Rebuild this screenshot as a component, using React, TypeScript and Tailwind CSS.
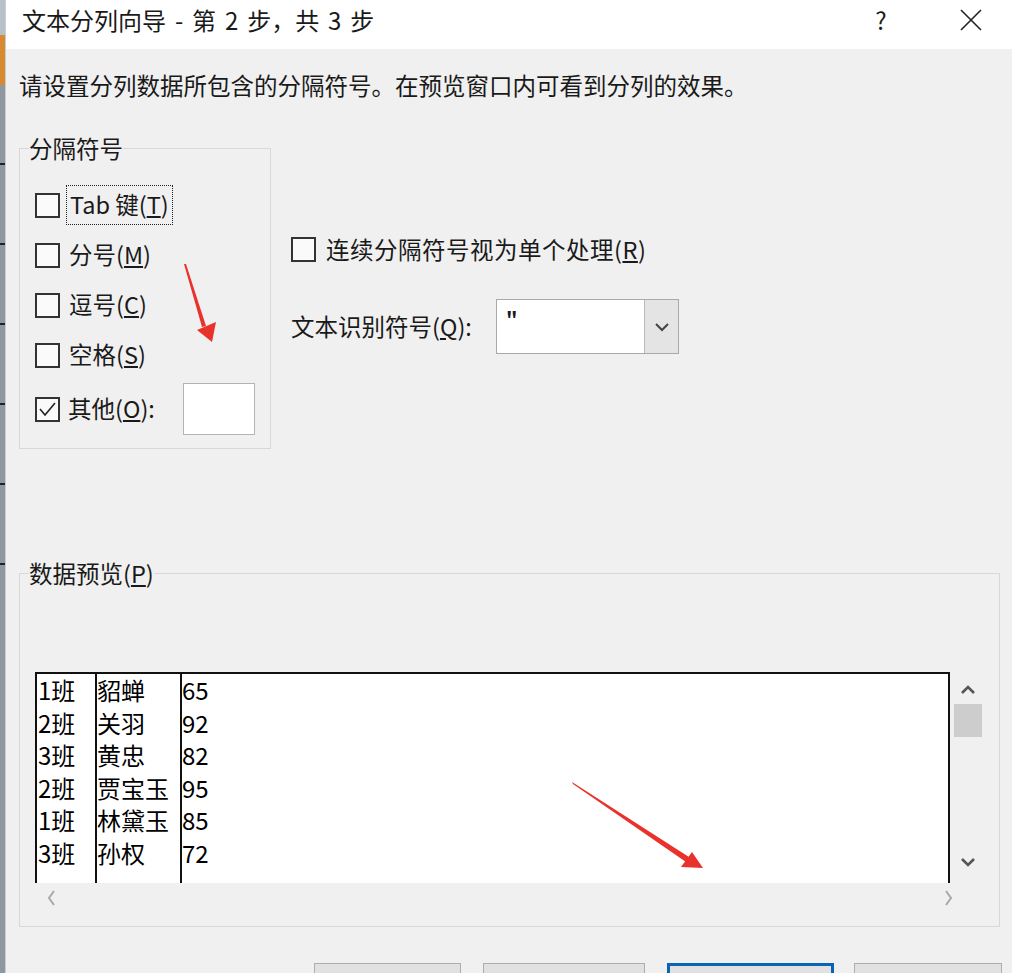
import React from 'react';

const FONT = { fontFamily: '"Noto Sans CJK SC", "Noto Sans", sans-serif' };

interface CheckProps {
  checked?: boolean;
}

const CheckBox: React.FC<CheckProps> = ({ checked }) => (
  <div className="w-[25px] h-[25px] border-2 border-[#333] bg-[#fafafa] flex items-center justify-center shrink-0">
    {checked && (
      <svg width="21" height="21" viewBox="0 0 21 21">
        <polyline points="3,10 8,16 18,4" fill="none" stroke="#222" strokeWidth="1.6" />
      </svg>
    )}
  </div>
);

const rows = [
  ['1班', '貂蝉', '65'],
  ['2班', '关羽', '92'],
  ['3班', '黄忠', '82'],
  ['2班', '贾宝玉', '95'],
  ['1班', '林黛玉', '85'],
  ['3班', '孙权', '72'],
];

const Chevron: React.FC<{ dir: 'up' | 'down' | 'left' | 'right'; color?: string; bold?: boolean }> = ({ dir, color = '#555', bold }) => {
  const pts = {
    up: '2,9 8,3 14,9',
    down: '2,3 8,9 14,3',
    left: '9,1 4,8 9,15',
    right: '5,1 10,8 5,15',
  }[dir];
  const vert = dir === 'up' || dir === 'down';
  return (
    <svg width={vert ? 16 : 14} height={vert ? 12 : 16} viewBox={vert ? '0 0 16 12' : '0 0 14 16'}>
      <polyline points={pts} fill="none" stroke={color} strokeWidth={bold ? 2.6 : 2} />
    </svg>
  );
};

export default function App() {
  return (
    <div className="w-[1012px] h-[973px] overflow-hidden flex bg-[#f0f0f0] text-[#1a1a1a] relative" style={FONT}>
      {/* window behind, left strip */}
      <div className="w-[5px] flex flex-col shrink-0">
        <div className="h-[35px] bg-[#b7c1ca]" />
        <div className="h-[50px] bg-[#d88a2e]" />
        <div className="flex-1 bg-[#8f979f] flex flex-col">
          <div className="h-[78px]" />
          <div className="h-[2px] bg-[#222]" />
          <div className="h-[78px]" />
          <div className="h-[2px] bg-[#222]" />
          <div className="h-[78px]" />
          <div className="h-[2px] bg-[#222]" />
          <div className="h-[78px]" />
          <div className="h-[2px] bg-[#222]" />
          <div className="h-[78px]" />
          <div className="h-[2px] bg-[#222]" />
          <div className="h-[78px]" />
          <div className="h-[2px] bg-[#222]" />
        </div>
      </div>

      <div className="flex-1 flex flex-col border-l border-[#c9ced4]">
        {/* title bar */}
        <div className="h-[49px] bg-white flex items-start pt-[4px] shrink-0">
          <div className="ml-[16px] text-[24px] leading-[32px] [word-spacing:3.5px]">文本分列向导 - 第 2 步，共 3 步</div>
          <div className="ml-auto w-[22px] text-center text-[24px] leading-[32px] mr-[68px]">?</div>
          <div className="mr-[30px] mt-[5px]">
            <svg width="22" height="22" viewBox="0 0 22 22">
              <path d="M1 1 L21 21 M21 1 L1 21" stroke="#222" strokeWidth="1.6" />
            </svg>
          </div>
        </div>

        <div className="flex-1 pl-[13px] flex flex-col">
          <div className="mt-[21px] text-[23.5px] leading-[30px]">请设置分列数据所包含的分隔符号。在预览窗口内可看到分列的效果。</div>

          <div className="mt-[48px] flex">
            {/* 分隔符号 */}
            <div className="relative w-[252px] h-[301px] border border-[#d8d8d8] shrink-0">
              <span className="absolute left-[9px] top-[-14px] bg-[#f0f0f0] text-[23.5px] leading-[26px]">分隔符号</span>
              <div className="pt-[31px] pl-[15px] flex flex-col text-[23.5px]">
                <div className="h-[50px] flex items-center">
                  <CheckBox />
                  <span className="ml-[6px] h-[40px] flex items-center px-[3px] border-[1.5px] border-dotted border-[#222] leading-none">
                    Tab 键(<u>T</u>)
                  </span>
                </div>
                <div className="h-[50px] flex items-center">
                  <CheckBox />
                  <span className="ml-[9px]">分号(<u>M</u>)</span>
                </div>
                <div className="h-[50px] flex items-center">
                  <CheckBox />
                  <span className="ml-[9px]">逗号(<u>C</u>)</span>
                </div>
                <div className="h-[50px] flex items-center">
                  <CheckBox />
                  <span className="ml-[9px]">空格(<u>S</u>)</span>
                </div>
                <div className="h-[52px] mt-[3px] flex items-center">
                  <CheckBox checked />
                  <span className="ml-[8px]">其他(<u>O</u>):</span>
                  <div className="ml-auto mr-[15px] w-[72px] h-[52px] bg-white border border-[#b4b4b4]" />
                </div>
              </div>
            </div>

            {/* right options */}
            <div className="ml-[20px] pt-[89px] flex flex-col text-[23.5px]">
              <div className="h-[25px] flex items-center">
                <CheckBox />
                <span className="ml-[10px] tracking-[0.5px]">连续分隔符号视为单个处理(<u>R</u>)</span>
              </div>
              <div className="mt-[37px] flex items-center">
                <span className="w-[205px]">文本识别符号(<u>Q</u>):</span>
                <div className="w-[183px] h-[55px] border border-[#a9a9a9] bg-white flex">
                  <div className="flex-1 pl-[9px] pt-[7px] text-[20px] font-bold leading-[24px]">"</div>
                  <div className="w-[34px] bg-[#e4e4e4] border-l border-[#b9b9b9] flex items-center justify-center">
                    <Chevron dir="down" color="#444" />
                  </div>
                </div>
              </div>
            </div>
          </div>

          {/* 数据预览 */}
          <div className="relative mt-[124px] w-[981px] h-[354px] border border-[#d8d8d8] shrink-0">
            <span className="absolute left-[9px] top-[-14px] bg-[#f0f0f0] text-[23.5px] leading-[26px]">
              数据预览(<u>P</u>)
            </span>
            <div className="pt-[98px] pl-[15px] flex">
              <div className="w-[915px] h-[211px] bg-white border-t-2 border-r-2 border-[#111] flex overflow-hidden text-[24px] leading-[32.5px] text-black">
                <div className="w-[60px] border-l-2 border-[#111] pl-[1px]">
                  {rows.map((r, i) => (
                    <div key={i}>{r[0]}</div>
                  ))}
                </div>
                <div className="w-[85px] border-l-2 border-[#111]">
                  {rows.map((r, i) => (
                    <div key={i}>{r[1]}</div>
                  ))}
                </div>
                <div className="flex-1 border-l-2 border-[#111]">
                  {rows.map((r, i) => (
                    <div key={i}>{r[2]}</div>
                  ))}
                </div>
              </div>
              <div className="w-[36px] h-[211px] flex flex-col items-center">
                <div className="h-[32px] flex items-center justify-center pt-[4px]">
                  <Chevron dir="up" bold />
                </div>
                <div className="w-[28px] h-[33px] bg-[#cdcdcd]" />
                <div className="mt-auto h-[36px] flex items-center justify-center pb-[6px]">
                  <Chevron dir="down" bold />
                </div>
              </div>
            </div>
            <div className="h-[30px] w-[930px] ml-[15px] flex items-center px-[10px] justify-between">
              <Chevron dir="left" color="#a8a8a8" />
              <Chevron dir="right" color="#a8a8a8" />
            </div>
          </div>

          {/* buttons */}
          <div className="mt-[36px] flex pl-[295px]">
            <div className="w-[147px] h-[40px] bg-[#e1e1e1] border border-[#adadad]" />
            <div className="ml-[22px] w-[162px] h-[40px] bg-[#e1e1e1] border border-[#adadad]" />
            <div className="ml-[22px] w-[167px] h-[40px] bg-[#e1e1e1] border-[3px] border-[#0a64b4]" />
            <div className="ml-[20px] w-[148px] h-[40px] bg-[#e1e1e1] border border-[#adadad]" />
          </div>
        </div>
      </div>

      {/* red annotation arrows */}
      <svg className="absolute left-0 top-0 pointer-events-none" width="1012" height="973">
        <polygon points="184,264 186,264 206,326 202,327" fill="#e8322b" />
        <polygon points="197,330 216,322 212,342" fill="#e8322b" />
        <polygon points="572,782 573,784 686,862 689,857" fill="#e8322b" />
        <polygon points="681,867 692,852 703,868" fill="#e8322b" />
      </svg>
    </div>
  );
}
